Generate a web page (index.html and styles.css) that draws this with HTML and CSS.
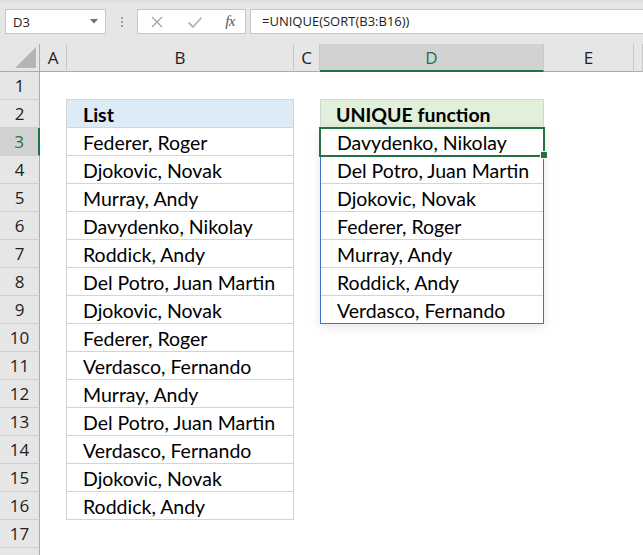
FILE: index.html
```html
<!DOCTYPE html>
<html>
<head>
<meta charset="utf-8">
<link rel="stylesheet" href="styles.css">
</head>
<body>
<div class="toolbar">
  <div class="namebox"><span>D3</span><svg class="dd" width="8" height="5" viewBox="0 0 8 5"><path d="M0 0H8L4 4.5Z" fill="#6d6d6d"/></svg></div>
  <div class="grip"><span></span><span></span><span></span></div>
  <div class="fxbtns">
    <svg class="ic" width="14" height="14" viewBox="0 0 14 14"><path d="M2 2L12 12M12 2L2 12" stroke="#a6a6a6" stroke-width="1.4" fill="none"/></svg>
    <svg class="ic" width="16" height="14" viewBox="0 0 16 14"><path d="M1.5 7.5L6 12L14.5 2.5" stroke="#b3b3b3" stroke-width="1.8" fill="none"/></svg>
    <span class="fx">fx</span>
  </div>
  <div class="formula">=UNIQUE(SORT(B3:B16))</div>
</div>
<div class="sheet">
  <div class="ch corner"><svg width="21" height="21" viewBox="0 0 21 21"><path d="M21 0V21H0Z" fill="#b5b5b5"/></svg></div>
  <div class="ch">A</div>
  <div class="ch">B</div>
  <div class="ch">C</div>
  <div class="ch sel">D</div>
  <div class="ch">E</div>
  <div class="ch"></div>

  <div class="rh">1</div>
  <div class="rh">2</div>
  <div class="rh sel">3</div>
  <div class="rh">4</div>
  <div class="rh">5</div>
  <div class="rh">6</div>
  <div class="rh">7</div>
  <div class="rh">8</div>
  <div class="rh">9</div>
  <div class="rh">10</div>
  <div class="rh">11</div>
  <div class="rh">12</div>
  <div class="rh">13</div>
  <div class="rh">14</div>
  <div class="rh">15</div>
  <div class="rh">16</div>
  <div class="rh">17</div>
  <div class="rh"></div>

  <div class="list-b">
    <div class="cell head-b">List</div>
    <div class="cell">Federer, Roger</div>
    <div class="cell">Djokovic, Novak</div>
    <div class="cell">Murray, Andy</div>
    <div class="cell">Davydenko, Nikolay</div>
    <div class="cell">Roddick, Andy</div>
    <div class="cell">Del Potro, Juan Martin</div>
    <div class="cell">Djokovic, Novak</div>
    <div class="cell">Federer, Roger</div>
    <div class="cell">Verdasco, Fernando</div>
    <div class="cell">Murray, Andy</div>
    <div class="cell">Del Potro, Juan Martin</div>
    <div class="cell">Verdasco, Fernando</div>
    <div class="cell">Djokovic, Novak</div>
    <div class="cell">Roddick, Andy</div>
  </div>

  <div class="list-d">
    <div class="cell head-d">UNIQUE function</div>
    <div class="spill">
      <div class="cell active">Davydenko, Nikolay</div>
      <div class="cell">Del Potro, Juan Martin</div>
      <div class="cell">Djokovic, Novak</div>
      <div class="cell">Federer, Roger</div>
      <div class="cell">Murray, Andy</div>
      <div class="cell">Roddick, Andy</div>
      <div class="cell last">Verdasco, Fernando</div>
    </div>
  </div>
</div>
</body>
</html>
```
FILE: styles.css
```css
html, body {
  margin: 0;
  padding: 0;
}
body {
  width: 643px;
  height: 555px;
  overflow: hidden;
  background: #ffffff;
  font-family: "Open Sans", "Noto Sans", sans-serif;
  color: #000;
}

/* formula bar */
.toolbar {
  height: 44px;
  box-sizing: border-box;
  padding-top: 9px;
  background: linear-gradient(#dadada 0, #e6e6e6 4px, #e6e6e6 100%);
  display: flex;
  align-items: flex-start;
}
.namebox {
  margin-left: 5px;
  width: 101px;
  height: 25px;
  box-sizing: border-box;
  background: #fff;
  border: 1px solid #c6c6c6;
  display: flex;
  align-items: center;
  justify-content: space-between;
  padding: 0 7px 0 7px;
  font-size: 13px;
  color: #222;
}
.grip {
  width: 31px;
  height: 25px;
  display: flex;
  flex-direction: column;
  align-items: center;
  justify-content: center;
  gap: 2px;
}
.grip span {
  width: 2px;
  height: 2px;
  background: #a0a0a0;
}
.fxbtns {
  width: 109px;
  height: 25px;
  box-sizing: border-box;
  background: #fff;
  border: 1px solid #c6c6c6;
  display: flex;
  align-items: center;
  justify-content: space-between;
  padding: 0 10px 0 12px;
}
.fx {
  font-family: "Liberation Serif", serif;
  font-style: italic;
  font-size: 15px;
  color: #555;
  letter-spacing: -0.5px;
}
.formula {
  margin-left: 4px;
  flex: 1;
  height: 25px;
  box-sizing: border-box;
  background: #fff;
  border: 1px solid #c6c6c6;
  border-right: none;
  padding-left: 11px;
  font-size: 13px;
  line-height: 23px;
  color: #222;
}

/* sheet */
.sheet {
  display: grid;
  grid-template-columns: 40px 27px 227px 26px 224px 90px 9px;
  grid-auto-rows: 28px;
}
.ch {
  grid-row: 1;
  background: #e6e6e6;
  box-sizing: border-box;
  border-right: 1px solid #c8c8c8;
  border-bottom: 1px solid #ababab;
  display: flex;
  align-items: center;
  justify-content: center;
  font-size: 17px;
  color: #222;
}
.ch.corner {
  border-right: 1px solid #ababab;
  justify-content: flex-end;
  align-items: flex-end;
  padding: 0 3px 3px 0;
}
.ch.sel {
  background: #d2d2d2;
  color: #217346;
  border-bottom: 2px solid #217346;
}
.rh {
  grid-column: 1;
  background: #e6e6e6;
  box-sizing: border-box;
  border-right: 1px solid #ababab;
  border-bottom: 1px solid #d0d0d0;
  display: flex;
  align-items: center;
  justify-content: center;
  font-size: 17px;
  color: #222;
}
.rh.sel {
  background: #d2d2d2;
  color: #217346;
  border-right: 2px solid #217346;
}

.cell {
  height: 28px;
  box-sizing: border-box;
  border-bottom: 1px solid #d4d4d4;
  padding-left: 16px;
  font-family: "Lato", sans-serif;
  font-size: 19.5px;
  line-height: 30px;
  white-space: nowrap;
}

.list-b {
  grid-column: 3;
  grid-row: 3 / 18;
  margin-left: -1px;
  margin-top: -1px;
  border: 1px solid #d4d4d4;
  border-bottom: none;
}
.head-b {
  background: #ddebf7;
  font-weight: bold;
}

.list-d {
  grid-column: 5;
  grid-row: 3 / 11;
  margin-top: -1px;
  display: flex;
  flex-direction: column;
}
.head-d {
  background: #e2efda;
  font-weight: bold;
  border: 1px solid #d4d4d4;
  border-bottom: none;
  padding-left: 15px;
}
.spill {
  border: 1px solid #4472c4;
  box-shadow: 0 3px 10px rgba(0, 0, 0, 0.10);
}
.spill .cell {
  padding-left: 16px;
}
.spill .cell.last {
  height: 27px;
  border-bottom: none;
}
.active {
  position: relative;
}
.active::after {
  content: "";
  position: absolute;
  left: -2px;
  right: -2px;
  top: -1px;
  bottom: -2px;
  border: 2px solid #217346;
}
.active::before {
  content: "";
  position: absolute;
  width: 6px;
  height: 6px;
  right: -4px;
  bottom: -3px;
  background: #217346;
  box-shadow: 0 0 0 1px #fff;
  z-index: 2;
}
```
